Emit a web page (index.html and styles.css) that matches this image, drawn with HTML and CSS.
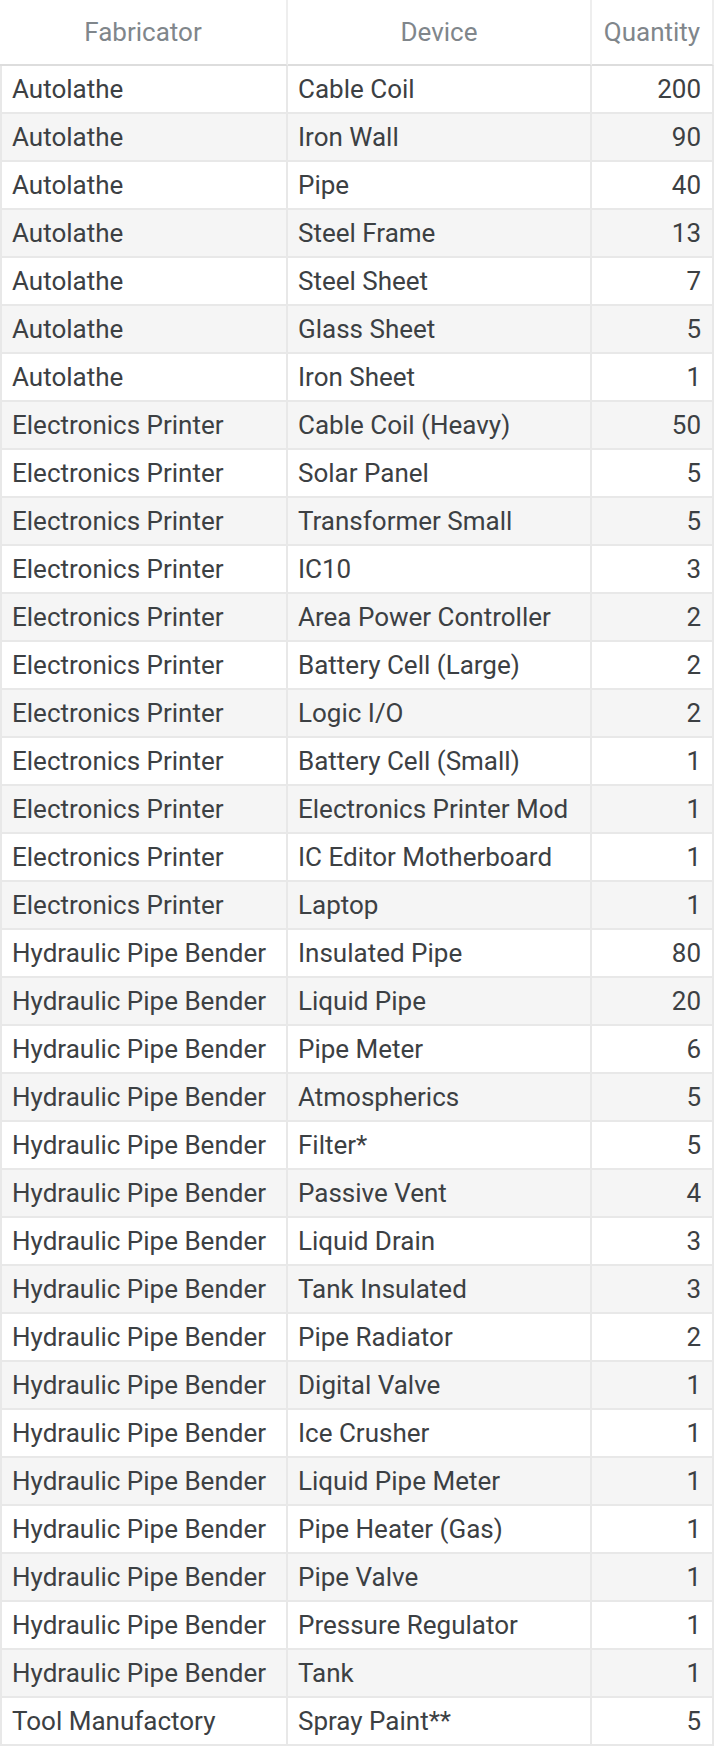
FILE: index.html
```html
<!DOCTYPE html>
<html>
<head>
<meta charset="utf-8">
<link rel="stylesheet" href="styles.css">
</head>
<body>
<table class="recipes">
  <colgroup>
    <col class="col-fab">
    <col class="col-dev">
    <col class="col-qty">
  </colgroup>
  <thead>
    <tr><th>Fabricator</th><th>Device</th><th>Quantity</th></tr>
  </thead>
  <tbody>
    <tr><td>Autolathe</td><td>Cable Coil</td><td class="num">200</td></tr>
    <tr><td>Autolathe</td><td>Iron Wall</td><td class="num">90</td></tr>
    <tr><td>Autolathe</td><td>Pipe</td><td class="num">40</td></tr>
    <tr><td>Autolathe</td><td>Steel Frame</td><td class="num">13</td></tr>
    <tr><td>Autolathe</td><td>Steel Sheet</td><td class="num">7</td></tr>
    <tr><td>Autolathe</td><td>Glass Sheet</td><td class="num">5</td></tr>
    <tr><td>Autolathe</td><td>Iron Sheet</td><td class="num">1</td></tr>
    <tr><td>Electronics Printer</td><td>Cable Coil (Heavy)</td><td class="num">50</td></tr>
    <tr><td>Electronics Printer</td><td>Solar Panel</td><td class="num">5</td></tr>
    <tr><td>Electronics Printer</td><td>Transformer Small</td><td class="num">5</td></tr>
    <tr><td>Electronics Printer</td><td>IC10</td><td class="num">3</td></tr>
    <tr><td>Electronics Printer</td><td>Area Power Controller</td><td class="num">2</td></tr>
    <tr><td>Electronics Printer</td><td>Battery Cell (Large)</td><td class="num">2</td></tr>
    <tr><td>Electronics Printer</td><td>Logic I/O</td><td class="num">2</td></tr>
    <tr><td>Electronics Printer</td><td>Battery Cell (Small)</td><td class="num">1</td></tr>
    <tr><td>Electronics Printer</td><td>Electronics Printer Mod</td><td class="num">1</td></tr>
    <tr><td>Electronics Printer</td><td>IC Editor Motherboard</td><td class="num">1</td></tr>
    <tr><td>Electronics Printer</td><td>Laptop</td><td class="num">1</td></tr>
    <tr><td>Hydraulic Pipe Bender</td><td>Insulated Pipe</td><td class="num">80</td></tr>
    <tr><td>Hydraulic Pipe Bender</td><td>Liquid Pipe</td><td class="num">20</td></tr>
    <tr><td>Hydraulic Pipe Bender</td><td>Pipe Meter</td><td class="num">6</td></tr>
    <tr><td>Hydraulic Pipe Bender</td><td>Atmospherics</td><td class="num">5</td></tr>
    <tr><td>Hydraulic Pipe Bender</td><td>Filter*</td><td class="num">5</td></tr>
    <tr><td>Hydraulic Pipe Bender</td><td>Passive Vent</td><td class="num">4</td></tr>
    <tr><td>Hydraulic Pipe Bender</td><td>Liquid Drain</td><td class="num">3</td></tr>
    <tr><td>Hydraulic Pipe Bender</td><td>Tank Insulated</td><td class="num">3</td></tr>
    <tr><td>Hydraulic Pipe Bender</td><td>Pipe Radiator</td><td class="num">2</td></tr>
    <tr><td>Hydraulic Pipe Bender</td><td>Digital Valve</td><td class="num">1</td></tr>
    <tr><td>Hydraulic Pipe Bender</td><td>Ice Crusher</td><td class="num">1</td></tr>
    <tr><td>Hydraulic Pipe Bender</td><td>Liquid Pipe Meter</td><td class="num">1</td></tr>
    <tr><td>Hydraulic Pipe Bender</td><td>Pipe Heater (Gas)</td><td class="num">1</td></tr>
    <tr><td>Hydraulic Pipe Bender</td><td>Pipe Valve</td><td class="num">1</td></tr>
    <tr><td>Hydraulic Pipe Bender</td><td>Pressure Regulator</td><td class="num">1</td></tr>
    <tr><td>Hydraulic Pipe Bender</td><td>Tank</td><td class="num">1</td></tr>
    <tr><td>Tool Manufactory</td><td>Spray Paint**</td><td class="num">5</td></tr>
  </tbody>
</table>
</body>
</html>
```

FILE: styles.css
```css
html, body {
  margin: 0;
  padding: 0;
  background: #ffffff;
}

.recipes {
  width: 714px;
  table-layout: fixed;
  border-collapse: separate;
  border-spacing: 0;
  font-family: Roboto, "Liberation Sans", sans-serif;
  font-size: 26px;
  color: #3c4043;
}

.col-fab { width: 288px; }
.col-dev { width: 304px; }
.col-qty { width: 122px; }

.recipes th {
  height: 64px;
  padding: 0;
  line-height: 64px;
  font-weight: 400;
  color: #80868b;
  text-align: center;
  border-right: 2px solid #eeeeee;
  border-bottom: 2px solid #dddddd;
  white-space: nowrap;
  overflow: hidden;
}

.recipes td {
  height: 46px;
  line-height: 46px;
  padding: 0 10px;
  border-right: 2px solid #e8e8e8;
  border-bottom: 2px solid #e8e8e8;
  white-space: nowrap;
  overflow: hidden;
}

.recipes td:first-child {
  border-left: 2px solid #e8e8e8;
}

.recipes td.num {
  text-align: right;
  padding-right: 11px;
}

.recipes tbody tr:nth-child(even) td {
  background: #f5f5f5;
}
```
